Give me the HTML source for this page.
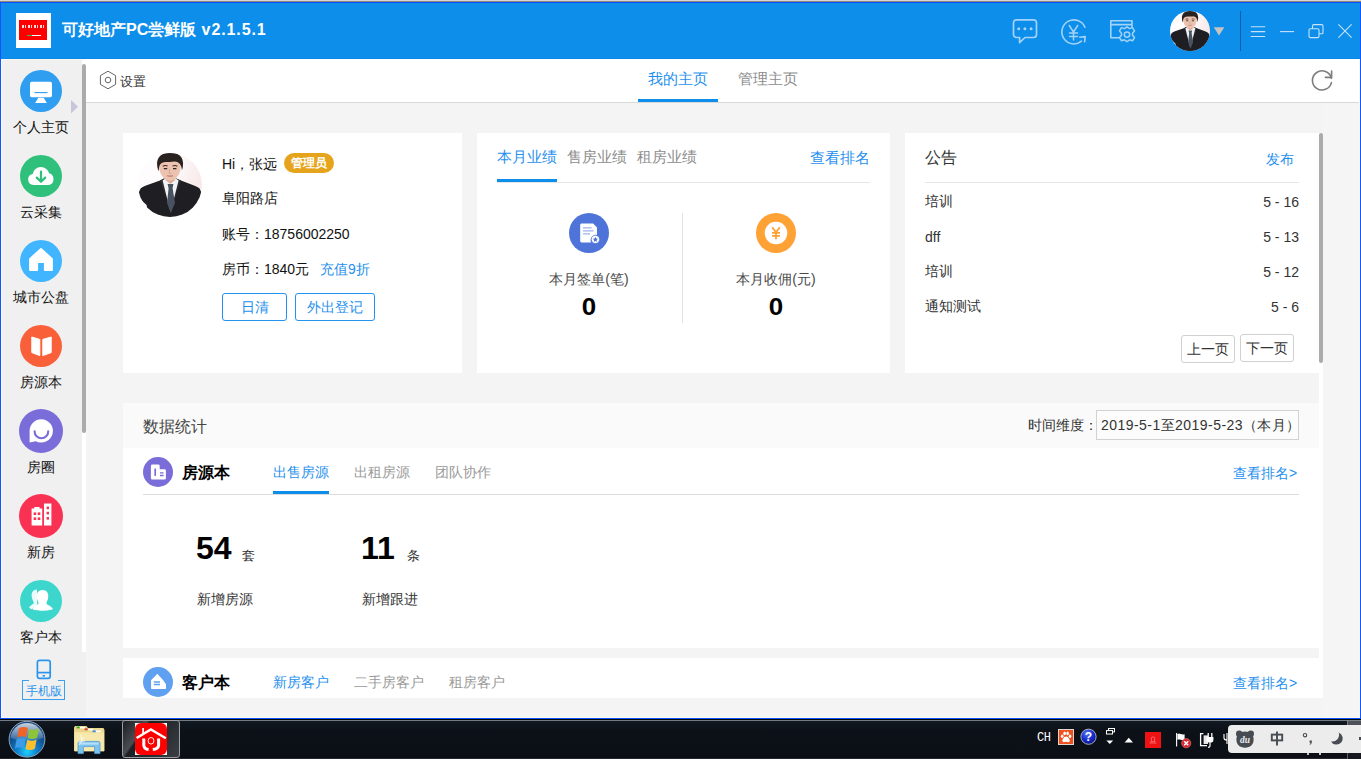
<!DOCTYPE html>
<html lang="zh">
<head>
<meta charset="utf-8">
<title>可好地产PC尝鲜版</title>
<style>
*{margin:0;padding:0;box-sizing:border-box}
html,body{width:1361px;height:759px;overflow:hidden;background:#f4f4f4;font-family:"Liberation Sans",sans-serif;color:#333}
.a{position:absolute;white-space:nowrap}
.t{position:absolute;white-space:nowrap;line-height:20px;height:20px}
.blue{color:#1f90ee}
.grey{color:#8c8c8c}
#win{position:absolute;left:0;top:0;width:1361px;height:719px;background:#f4f4f4;overflow:hidden}
#hdr{position:absolute;left:0;top:3px;width:1361px;height:56px;background:#0d8eea}
#side{position:absolute;left:1px;top:59px;width:85px;height:658px;background:#f0f0f0}
#tabbar{position:absolute;left:86px;top:59px;width:1274px;height:44px;background:#fff;border-bottom:1px solid #d9d9d9}
.card{position:absolute;background:#fff}
.ic{position:absolute;border-radius:50%}
.lbl{position:absolute;left:0;width:82px;text-align:center;font-size:14px;line-height:18px;color:#111;white-space:nowrap}
.btn{position:absolute;height:28px;border:1px solid #2393f0;border-radius:3px;color:#1f90ee;font-size:14px;line-height:26px;text-align:center;white-space:nowrap}
.pbtn{position:absolute;height:28px;border:1px solid #d0d0d0;border-radius:3px;color:#333;font-size:14px;line-height:26px;text-align:center;white-space:nowrap;background:#fff}
#task{position:absolute;left:0;top:719px;width:1361px;height:40px;background:linear-gradient(#131a22 0%,#0c1118 30%,#0b0f15 100%)}
</style>
</head>
<body>
<div id="win">
<!-- top edge -->
<div class="a" style="left:0;top:0;width:1361px;height:1px;background:#d6d6d6"></div>
<div class="a" style="left:0;top:1px;width:1361px;height:1px;background:#8f8878"></div>
<div class="a" style="left:0;top:2px;width:1361px;height:1px;background:#0a52ff;z-index:3"></div>

<!-- HEADER -->
<div id="hdr"></div>
<div class="a" style="left:16px;top:13px;width:35px;height:35px;background:#fff"></div>
<div class="a" style="left:19px;top:20px;width:28px;height:20px;background:#fe0000"></div>
<div class="a" style="left:22px;top:25px;width:22px;height:3px;background:repeating-linear-gradient(90deg,#fff 0 2px,#fe0000 2px 3px,#fff 3px 4px,#fe0000 4px 6px);opacity:.85"></div>
<div class="a" style="left:27px;top:35px;width:5px;height:1px;background:#35c05a"></div>
<div class="a" style="left:32px;top:35px;width:9px;height:1px;background:#fff"></div>
<div class="t" style="left:62px;top:20px;font-size:16px;font-weight:bold;color:#fff">可好地产PC尝鲜版<span style="letter-spacing:.9px"> v2.1.5.1</span></div>

<svg width="0" height="0" style="position:absolute">
 <defs>
  <clipPath id="avc"><circle cx="32" cy="32" r="32"/></clipPath>
  <symbol id="av" viewBox="0 0 64 64">
   <linearGradient id="avbg" x1="0" y1="0" x2="1" y2=".3"><stop offset=".55" stop-color="#fefcfc"/><stop offset="1" stop-color="#f8e9ea"/></linearGradient><circle cx="32" cy="32" r="32" fill="url(#avbg)"/>
   <g clip-path="url(#avc)">
    
    <path d="M0 41 L2.6 35.6 Q4 33.6 8 32.4 L22 27.6 L26 25.4 L38 25.4 L43 27.6 L56 32.4 Q60 33.6 61.6 35.6 L64 41 L64 64 L10 64 L8.6 52 L2 46 Z" fill="#1e1e23"/>
    <path d="M22 27.6 L26 25.4 L32.4 56 Z M43 27.6 L38 25.4 L32.6 56 Z" fill="#2c2c33"/>
    <path d="M24.6 27.4 L32.5 59 L40.6 27.4 L36.5 24.6 L28.5 24.6 Z" fill="#f3f3f6"/>
    <path d="M29.6 31 L35.4 31 L34.6 35.2 L37 50 L32.8 60 L29 50 L30.6 35.2 Z" fill="#485261"/>
    <path d="M27.4 20 h9.8 v7 l-4.8 4 l-5 -4z" fill="#dcae9b"/>
    <path d="M21 13 C21 6 26 3.4 32 3.4 C38 3.4 42.8 6 42.8 13 C42.8 20 38.6 27.4 32 27.4 C25.4 27.4 21 20 21 13 Z" fill="#ebc3b0"/>
    <path d="M24.8 13.2 q2.4 -1.2 4.8 -.2 M34.6 13 q2.4 -1 4.8 .2" stroke="#3a2a26" stroke-width="1.1" fill="none"/>
    <path d="M25.8 15.6 h3.4 M35 15.6 h3.4" stroke="#2e2422" stroke-width="1.3" fill="none"/>
    <path d="M31.8 16 q-.8 3 -.4 4.2 q1 .6 2 0" stroke="#d09c88" stroke-width=".8" fill="none"/>
    <path d="M29.2 22.6 q2.8 1.2 5.6 0" stroke="#c27f72" stroke-width="1.2" fill="none"/>
    <path d="M20.2 17.6 C16.4 6 22.4 -0.6 32 -0.2 C42.6 -0.6 47.4 6 44 17.6 C43.6 12 41 8.4 36.6 8.6 C31 9.6 26 8 23 10.4 C21 12.4 21 14.6 20.8 17.6 Z" fill="#2a2220"/>
   </g>
  </symbol>
 </defs>
</svg>
<!-- chat -->
<svg class="a" style="left:1011px;top:17px" width="28" height="28" viewBox="0 0 28 28" fill="none" stroke="#a3d3f8" stroke-width="1.7" stroke-linejoin="round" stroke-linecap="round">
 <path d="M5.5 2.8 H22.5 a3 3 0 0 1 3 3 V17.5 a3 3 0 0 1 -3 3 H14 L8.6 25.6 V20.5 H5.5 a3 3 0 0 1 -3 -3 V5.8 a3 3 0 0 1 3 -3 Z"/>
 <g fill="#a3d3f8" stroke="none"><circle cx="7.7" cy="11.7" r="1.5"/><circle cx="13.9" cy="11.7" r="1.5"/><circle cx="20.1" cy="11.7" r="1.5"/></g>
</svg>
<!-- yen -->
<svg class="a" style="left:1059px;top:17px" width="30" height="30" viewBox="0 0 30 30" fill="none" stroke="#a3d3f8" stroke-width="1.6" stroke-linecap="round" stroke-linejoin="round">
 <path d="M25.9 10.2 A12 12 0 1 0 22.5 24.2"/>
 <path d="M20.8 20.2 L26.2 19.6 L25.6 24.8"/>
 <path d="M10.3 8.5 L14.5 15 L18.7 8.5 M14.5 15 V23 M10.5 16 H18.5 M10.5 19.5 H18.5" stroke-width="1.5"/>
</svg>
<!-- settings window -->
<svg class="a" style="left:1108px;top:17px" width="30" height="30" viewBox="0 0 30 30" fill="none" stroke="#a3d3f8" stroke-width="1.6" stroke-linejoin="round">
 <path d="M11 20.8 H2.8 V3.8 H24 V10.5 M2.8 7.6 H24"/>
 <path d="M19 9.8 l2.6 1.8 2.9 -1 2 3.3 -2 2.3 0 2 2 2.3 -2 3.3 -2.9 -1 -2.6 1.8 -2.6 -1.8 -2.9 1 -2 -3.3 2 -2.3 0 -2 -2 -2.3 2 -3.3 2.9 1 Z" stroke-width="1.5"/>
 <circle cx="19" cy="17.6" r="2.7" stroke-width="1.5"/>
</svg>
<!-- avatar -->
<svg class="a" style="left:1170px;top:11px" width="40" height="40"><use href="#av"/></svg>
<svg class="a" style="left:1213px;top:26px" width="12" height="10"><path d="M0.8 1.2 H11.3 L6 9.4 Z" fill="#c4c4c4"/></svg>
<div class="a" style="left:1240px;top:11px;width:1px;height:40px;background:#0961ad"></div>
<!-- window controls -->
<svg class="a" style="left:1248px;top:20px" width="108" height="22" viewBox="0 0 108 22" fill="none" stroke="#c6e3fa" stroke-width="1.1">
 <path d="M2.8 6.7 H17.2 M2.8 11.6 H17.2 M2.8 16.5 H17.2"/>
 <path d="M32 11.6 H46"/>
 <rect x="64.5" y="4.6" width="10.5" height="9.2" rx="1.3"/>
 <rect x="61" y="8.8" width="10" height="8.8" rx="1.3" fill="#0d8eea"/>
 <path d="M90.4 4.4 L103.6 17.6 M103.6 4.4 L90.4 17.6"/>
</svg>


<!-- SIDEBAR -->
<div id="side"></div>
<div class="a" style="left:82px;top:59px;width:4px;height:593px;background:#fff"></div>
<div class="a" style="left:82px;top:64px;width:4px;height:369px;background:#ababab;border-radius:2px"></div>
<svg class="a" style="left:70px;top:99px" width="9" height="16"><path d="M1 1 L8 7.7 L1 14.4 Z" fill="#c6c5da"/></svg>
<!-- 1 monitor -->
<svg class="a" style="left:20px;top:70px" width="42" height="42" viewBox="0 0 42 42"><circle cx="21" cy="21" r="21" fill="#2f9df0"/><rect x="10" y="11.8" width="22" height="15.4" rx="1.6" fill="#fff"/><path d="M14.5 22.6 H27.5" stroke="#2f9df0" stroke-width="1.1"/><path d="M18.3 27.8 H23.7 L26.8 33 H15.2 Z" fill="#fff"/></svg>
<div class="lbl" style="top:118px">个人主页</div>
<!-- 2 cloud -->
<svg class="a" style="left:20px;top:155px" width="42" height="42" viewBox="0 0 42 42"><circle cx="21" cy="21" r="21" fill="#2fc07b"/><path d="M13.5 30 a5.6 5.6 0 0 1 -0.8 -11.1 a8.4 8.4 0 0 1 16.4 -0.6 a6 6 0 0 1 -0.6 11.7 Z" fill="#fff"/><path d="M21 16.5 V26.5 M16.8 22.6 L21 26.8 L25.2 22.6" stroke="#2fc07b" stroke-width="2.2" fill="none" stroke-linecap="round" stroke-linejoin="round"/></svg>
<div class="lbl" style="top:203px">云采集</div>
<!-- 3 house -->
<svg class="a" style="left:20px;top:240px" width="42" height="42" viewBox="0 0 42 42"><circle cx="21" cy="21" r="21" fill="#41b5ff"/><path d="M21 9 L32 18.8 V30 H24.8 V22 H17.2 V30 H10 V18.8 Z" fill="#fff" stroke="#fff" stroke-width="1.8" stroke-linejoin="round"/></svg>
<div class="lbl" style="top:288px">城市公盘</div>
<!-- 4 book -->
<svg class="a" style="left:20px;top:325px" width="42" height="42" viewBox="0 0 42 42"><circle cx="21" cy="21" r="21" fill="#f9603a"/><path d="M11.8 12 L19.8 14.4 V30.6 L11.8 27.6 Z M31.2 12 L22.8 14.4 V30.6 L31.2 27.6 Z" fill="#fff" stroke="#fff" stroke-width="1" stroke-linejoin="round"/></svg>
<div class="lbl" style="top:373px">房源本</div>
<!-- 5 bubble -->
<svg class="a" style="left:19px;top:409px" width="44" height="44" viewBox="0 0 44 44"><circle cx="22" cy="22" r="22" fill="#7a6cd9"/><path d="M22.3 10.2 a11.7 11.7 0 1 1 -5.6 22 L10.6 33.4 V22 a11.7 11.7 0 0 1 11.7 -11.8 Z" fill="#fff"/><path d="M15.6 22.4 a6.8 6.8 0 0 0 13.6 0" fill="none" stroke="#7a6cd9" stroke-width="2.1" stroke-linecap="round"/></svg>
<div class="lbl" style="top:458px">房圈</div>
<!-- 6 buildings -->
<svg class="a" style="left:19px;top:494px" width="44" height="44" viewBox="0 0 44 44"><circle cx="22" cy="22" r="22" fill="#f93254"/><path d="M12.6 14.6 H15.3 V13 H20.5 V14.6 H23.2 V31.4 H12.6 Z M25 9.4 H32.4 V31.4 H25 Z" fill="#fff"/><g fill="#f93254"><rect x="14.6" y="18.4" width="2.6" height="2.6"/><rect x="18.7" y="18.4" width="2.6" height="2.6"/><rect x="14.6" y="23.4" width="2.6" height="2.6"/><rect x="18.7" y="23.4" width="2.6" height="2.6"/><rect x="27.6" y="12.6" width="2.4" height="2.6"/><rect x="27.6" y="17.8" width="2.4" height="2.6"/><rect x="27.6" y="23" width="2.4" height="2.6"/></g></svg>
<div class="lbl" style="top:543px">新房</div>
<!-- 7 users -->
<svg class="a" style="left:20px;top:580px" width="42" height="42" viewBox="0 0 42 42"><circle cx="21" cy="21" r="21" fill="#3dd6cc"/><path d="M17 9.6 c-4 0 -6 3.4 -5.2 7.6 c0.6 3 2 4.6 2 5.6 c0 1.6 -3.4 2.4 -4.6 4.6 l2 1.8 l6 -4 Z" fill="#fff" opacity=".9"/><path d="M22.6 10 c4 0 6.2 3.2 5.6 7.4 c-0.4 2.8 -1.8 4.6 -1.8 5.8 c0 1.8 5 2.2 6.4 5.8 c-3 2.2 -17.6 2.4 -20.4 0 c1.4 -3.6 6.2 -4 6.2 -5.8 c0 -1.2 -1.4 -3 -1.8 -5.8 c-0.6 -4.2 1.8 -7.4 5.8 -7.4 Z" fill="#fff"/></svg>
<div class="lbl" style="top:628px">客户本</div>
<!-- phone -->
<svg class="a" style="left:35px;top:658px" width="18" height="23" viewBox="0 0 18 23" fill="none" stroke="#2a95ee" stroke-width="1.7"><rect x="2.4" y="2.4" width="12.8" height="18" rx="2.2"/><path d="M2.4 14.6 H15.2"/><path d="M7.6 17.8 H10" stroke-width="1.6"/></svg>
<div class="a" style="left:22px;top:680px;width:43px;height:20px;border:1px solid #3a9ff0;border-top:none"></div>
<div class="a" style="left:22px;top:680px;width:7px;height:1px;background:#3a9ff0"></div>
<div class="a" style="left:58px;top:680px;width:7px;height:1px;background:#3a9ff0"></div>
<div class="a" style="left:22px;top:682px;width:43px;height:17px;line-height:18px;text-align:center;font-size:12.3px;color:#2a95ee">手机版</div>


<!-- TABBAR -->
<div id="tabbar"></div>
<svg class="a" style="left:99px;top:70px" width="18" height="20" viewBox="0 0 18 20" fill="none" stroke="#666" stroke-width="1"><path d="M9 1.2 L16.6 5.6 V14.4 L9 18.8 L1.4 14.4 V5.6 Z" stroke-linejoin="round"/><circle cx="9" cy="10" r="2.8"/></svg>
<div class="t" style="left:120px;top:72px;font-size:13px">设置</div>
<div class="t blue" style="left:648px;top:69px;font-size:15px">我的主页</div>
<div class="a" style="left:638px;top:99px;width:80px;height:3px;background:#0d8eea"></div>
<div class="t grey" style="left:738px;top:69px;font-size:15px">管理主页</div>
<svg class="a" style="left:1310px;top:68px" width="24" height="24" viewBox="0 0 24 24" fill="none" stroke="#7d7d7d" stroke-width="1.6" stroke-linecap="round" stroke-linejoin="round"><path d="M21.4 10.2 A9.6 9.6 0 1 0 21.4 14.6"/><path d="M21.6 3 V9.4 H15.4" /></svg>


<!-- MAIN -->
<!-- scroll track & right strip -->
<div class="a" style="left:1323px;top:103px;width:37px;height:614px;background:#f5f5f5"></div>
<div class="a" style="left:1319px;top:133px;width:4px;height:565px;background:#fff"></div>
<div class="a" style="left:1319px;top:133px;width:4px;height:230px;background:#ababab;border-radius:2px"></div>

<!-- card 1 -->
<div class="card" style="left:123px;top:133px;width:339px;height:240px"></div>
<svg class="a" style="left:138px;top:153px" width="64" height="64"><use href="#av"/></svg>
<div class="t" style="left:222px;top:154px;font-size:14px;color:#111">Hi，张远</div>
<div class="a" style="left:284px;top:153px;width:50px;height:20px;border-radius:10px;background:#e6a41c;color:#fff;font-size:12px;font-weight:bold;line-height:20px;text-align:center">管理员</div>
<div class="t" style="left:222px;top:189px;font-size:13.7px;color:#111">阜阳路店</div>
<div class="t" style="left:222px;top:224px;font-size:14px;color:#111">账号：18756002250</div>
<div class="t" style="left:222px;top:259px;font-size:14px;color:#111">房币：1840元</div>
<div class="t blue" style="left:320px;top:259px;font-size:14px">充值9折</div>
<div class="btn" style="left:222px;top:293px;width:65px">日清</div>
<div class="btn" style="left:295px;top:293px;width:80px">外出登记</div>

<!-- card 2 -->
<div class="card" style="left:477px;top:133px;width:413px;height:240px"></div>
<div class="t blue" style="left:497px;top:147px;font-size:15px">本月业绩</div>
<div class="t grey" style="left:567px;top:147px;font-size:15px">售房业绩</div>
<div class="t grey" style="left:637px;top:147px;font-size:15px">租房业绩</div>
<div class="t blue" style="left:810px;top:148px;font-size:15px">查看排名</div>
<div class="a" style="left:497px;top:182px;width:373px;height:1px;background:#e6e6e6"></div>
<div class="a" style="left:497px;top:179px;width:60px;height:3px;background:#0d8eea"></div>
<div class="a" style="left:682px;top:213px;width:1px;height:110px;background:#e2e2e2"></div>
<svg class="a" style="left:569px;top:213px" width="40" height="40" viewBox="0 0 40 40"><circle cx="20" cy="20" r="20" fill="#4f74d9"/><path d="M12.6 10.6 H24.2 L28 14.4 V22.5 A5.2 5.2 0 0 0 22 29.4 H12.6 A1.4 1.4 0 0 1 11.2 28 V12 A1.4 1.4 0 0 1 12.6 10.6 Z" fill="#fff"/><path d="M14 14.8 H22.6 M14 17.8 H24.6 M14 20.8 H21" stroke="#9db3ee" stroke-width="1.3"/><circle cx="26.4" cy="26.4" r="4.2" fill="#fff" stroke="#4f74d9" stroke-width=".8"/><path d="M26.4 23.8 l.8 1.7 1.8.2 -1.3 1.3 .3 1.8 -1.6-.9 -1.6.9 .3-1.8 -1.3-1.3 1.8-.2z" fill="#4f74d9"/></svg>
<div class="t" style="left:509px;top:269px;width:160px;text-align:center;font-size:14px;color:#4a4a4a">本月签单(笔)</div>
<div class="t" style="left:509px;top:293px;width:160px;height:28px;line-height:28px;text-align:center;font-size:24px;font-weight:bold;color:#000;transform:scaleX(1.08)">0</div>
<svg class="a" style="left:756px;top:213px" width="40" height="40" viewBox="0 0 40 40"><circle cx="20" cy="20" r="20" fill="#ffa235"/><circle cx="20" cy="20" r="11.3" fill="#fff"/><path d="M16.2 14.2 L20 19.4 L23.8 14.2 M20 19.4 V26.2 M16 19.8 H24 M16 22.9 H24" stroke="#ffa235" stroke-width="1.8" fill="none"/></svg>
<div class="t" style="left:696px;top:269px;width:160px;text-align:center;font-size:14px;color:#4a4a4a">本月收佣(元)</div>
<div class="t" style="left:696px;top:293px;width:160px;height:28px;line-height:28px;text-align:center;font-size:24px;font-weight:bold;color:#000;transform:scaleX(1.08)">0</div>

<!-- card 3 -->
<div class="card" style="left:905px;top:133px;width:414px;height:240px"></div>
<div class="t" style="left:925px;top:148px;font-size:16px;color:#333">公告</div>
<div class="t blue" style="left:1266px;top:149px;font-size:14px">发布</div>
<div class="a" style="left:925px;top:182px;width:374px;height:1px;background:#e6e6e6"></div>
<div class="t" style="left:925px;top:192px;font-size:13.5px">培训</div><div class="t" style="left:1199px;width:100px;text-align:right;top:192px;font-size:14px">5 - 16</div>
<div class="t" style="left:925px;top:227px;font-size:14px">dff</div><div class="t" style="left:1199px;width:100px;text-align:right;top:227px;font-size:14px">5 - 13</div>
<div class="t" style="left:925px;top:262px;font-size:13.5px">培训</div><div class="t" style="left:1199px;width:100px;text-align:right;top:262px;font-size:14px">5 - 12</div>
<div class="t" style="left:925px;top:297px;font-size:13.5px">通知测试</div><div class="t" style="left:1199px;width:100px;text-align:right;top:297px;font-size:14px">5 - 6</div>
<div class="pbtn" style="left:1181px;top:335px;width:54px">上一页</div>
<div class="pbtn" style="left:1240px;top:334px;width:54px">下一页</div>

<!-- data stats -->
<div class="a" style="left:123px;top:403px;width:1196px;height:45px;background:#fafafa"></div>
<div class="card" style="left:123px;top:448px;width:1196px;height:200px"></div>
<div class="t" style="left:143px;top:417px;font-size:16px;color:#444">数据统计</div>
<div class="t" style="left:1028px;top:415px;font-size:14px;color:#333">时间维度：</div>
<div class="a" style="left:1096px;top:410px;width:203px;height:30px;border:1px solid #d2d2d2;background:#fcfcfc"></div>
<div class="t" style="left:1101px;top:415px;font-size:14px;color:#333;letter-spacing:.45px">2019-5-1至2019-5-23（本月）</div>

<svg class="a" style="left:143px;top:457px" width="30" height="30" viewBox="0 0 30 30"><circle cx="15" cy="15" r="15" fill="#7a6cd9"/><path d="M9.3 7.6 H15.3 A1.4 1.4 0 0 1 16.7 9 V12.3 H21.5 A1.4 1.4 0 0 1 22.9 13.7 V21.2 A1.4 1.4 0 0 1 21.5 22.6 H9.3 A1.4 1.4 0 0 1 7.9 21.2 V9 A1.4 1.4 0 0 1 9.3 7.6 Z" fill="#fff"/><path d="M12.2 11.6 V18.9" stroke="#7a6cd9" stroke-width="1.7"/><path d="M17 15.9 H20.6 M17 18.5 H20.6" stroke="#7a6cd9" stroke-width="1.3"/></svg>
<div class="t" style="left:182px;top:463px;font-size:15.8px;font-weight:bold;color:#000">房源本</div>
<div class="t blue" style="left:273px;top:462px;font-size:14px">出售房源</div>
<div class="t" style="left:354px;top:462px;font-size:14px;color:#999">出租房源</div>
<div class="t" style="left:435px;top:462px;font-size:14px;color:#999">团队协作</div>
<div class="t blue" style="left:1233px;top:463px;font-size:14px">查看排名&gt;</div>
<div class="a" style="left:143px;top:494px;width:1156px;height:1px;background:#dcdcdc"></div>
<div class="a" style="left:273px;top:491px;width:56px;height:3px;background:#0d8eea"></div>

<div class="t" style="left:196px;top:528px;height:40px;line-height:40px;font-size:32px;font-weight:bold;color:#000">54</div>
<div class="t" style="left:242px;top:546px;font-size:13px;color:#333">套</div>
<div class="t" style="left:197px;top:589px;font-size:14px;color:#333">新增房源</div>
<div class="t" style="left:361px;top:528px;height:40px;line-height:40px;font-size:32px;font-weight:bold;color:#000">11</div>
<div class="t" style="left:407px;top:546px;font-size:13px;color:#333">条</div>
<div class="t" style="left:362px;top:589px;font-size:14px;color:#333">新增跟进</div>

<!-- customers card -->
<div class="card" style="left:123px;top:658px;width:1200px;height:40px"></div>
<svg class="a" style="left:143px;top:667px" width="30" height="30" viewBox="0 0 30 30"><circle cx="15" cy="15" r="15" fill="#5fa0f0"/><path d="M14.3 7.6 L20 13.8 L20.4 14.6 L22.4 17.4 V21.3 H8.7 V13.4 Z" fill="#fff" stroke="#fff" stroke-width="1.2" stroke-linejoin="round"/><path d="M10.8 14.9 H17 M10.8 17.6 H17" stroke="#5fa0f0" stroke-width="1.5"/></svg>
<div class="t" style="left:182px;top:673px;font-size:15.8px;font-weight:bold;color:#000">客户本</div>
<div class="t blue" style="left:273px;top:672px;font-size:14px">新房客户</div>
<div class="t" style="left:354px;top:672px;font-size:14px;color:#999">二手房客户</div>
<div class="t" style="left:449px;top:672px;font-size:14px;color:#999">租房客户</div>
<div class="t blue" style="left:1233px;top:673px;font-size:14px">查看排名&gt;</div>


<!-- window borders -->
<div class="a" style="left:1px;top:59px;width:1px;height:659px;background:#fcf8f0"></div>
<div class="a" style="left:1px;top:59px;width:85px;height:1px;background:#fcf8f0"></div>
<div class="a" style="left:1px;top:58px;width:1359px;height:1px;background:#0789e5"></div>
<div class="a" style="left:1359px;top:59px;width:1px;height:659px;background:#fcf8f0"></div>
<div class="a" style="left:1px;top:717px;width:1359px;height:1px;background:#fcf8f0"></div>
<div class="a" style="left:0;top:2px;width:1px;height:717px;background:#0f57ff"></div>
<div class="a" style="left:1360px;top:2px;width:1px;height:717px;background:#0f57ff"></div>
<div class="a" style="left:0;top:718px;width:1361px;height:1px;background:#0a52ff"></div>
</div>

<!-- TASKBAR -->
<div id="task"></div>
<div class="a" style="left:0;top:719px;width:1361px;height:1px;background:#05080b"></div>
<div class="a" style="left:0;top:720px;width:1361px;height:1px;background:#737b87"></div>
<div class="a" style="left:0;top:758px;width:1361px;height:1px;background:#25292e"></div>
<!-- start orb -->
<svg class="a" style="left:7px;top:719px" width="40" height="40" viewBox="0 0 40 40">
 <defs>
  <radialGradient id="orb" cx="50%" cy="85%" r="75%"><stop offset="0" stop-color="#20d0ff"/><stop offset=".35" stop-color="#0f84d0"/><stop offset=".7" stop-color="#12518f"/><stop offset="1" stop-color="#1b4a80"/></radialGradient>
  <linearGradient id="orbhl" x1="0" y1="0" x2="0" y2="1"><stop offset="0" stop-color="#fff" stop-opacity=".75"/><stop offset="1" stop-color="#fff" stop-opacity=".12"/></linearGradient>
 </defs>
 <circle cx="20" cy="20.2" r="17.9" fill="url(#orb)" stroke="#8fa6bd" stroke-width="1"/>
 <path d="M3.6 18.7 A16.5 16.5 0 0 1 36.4 18.7 C28 22.5 12 22.5 3.6 18.7 Z" fill="url(#orbhl)"/>
 <g transform="translate(20 19.4) scale(1.12) translate(-19.4 -18.2)">
 <path d="M12.2 9.2 C15 7.6 17.6 7.8 20.2 9 L18.6 17.2 C16 16 13.4 16 10.6 17.4 Z" fill="#f0642a"/>
 <path d="M21.6 9.6 C24.4 11 27.2 10.8 30.2 9.4 L28.4 17.6 C25.6 19 22.8 19 20 17.8 Z" fill="#8cc43c"/>
 <path d="M10.2 18.8 C13 17.4 15.6 17.6 18.2 18.8 L16.6 27 C14 25.8 11.4 25.8 8.6 27.2 Z" fill="#3d9be8"/>
 <path d="M19.6 19.4 C22.4 20.6 25.2 20.6 28 19.2 L26.4 27.4 C23.6 28.8 20.8 28.8 18 27.6 Z" fill="#fcbf2e"/>
 </g>
</svg>
<!-- folder -->
<svg class="a" style="left:72px;top:724px" width="35" height="32" viewBox="0 0 35 32">
 <path d="M2 3.4 L3 2 H14.5 L16 4 H31.5 L32.5 6 V27 H2 Z" fill="#e9d48a"/>
 <path d="M2.6 8 H32 V27.4 H2.6 Z" fill="#f5e6a3"/>
 <path d="M17 6.6 L18.6 4.6 H31 V9 H17 Z" fill="#f0de98"/>
 <rect x="4.6" y="2.6" width="3" height="1.8" fill="#26b32b"/><rect x="8" y="2.8" width="5" height="1.6" fill="#fff"/>
 <rect x="12.6" y="4.4" width="3" height="1.8" fill="#d23a2a"/><rect x="16" y="4.8" width="5" height="1.5" fill="#fff"/>
 <rect x="20.6" y="6.4" width="3" height="1.8" fill="#2f8fe8"/><rect x="24" y="6.6" width="5" height="1.6" fill="#fff"/>
 <path d="M3 10 H31.6 V27 H3 Z" fill="#f7e9ae"/>
 <path d="M6 19 Q6 17.4 7.6 17.4 H26.4 Q28 17.4 28 19 V29.6 H22.6 V22.6 H11.4 V29.6 H6 Z" fill="#7ec3ee" stroke="#4c9cd4" stroke-width=".8"/>
 <path d="M7.2 18.6 H26.8 V20.6 H7.2 Z" fill="#c4e6fa" opacity=".8"/>
 <path d="M9 11 L9.6 17 M6 18 L13 17 M12 13.4 L7 21" stroke="#fff" stroke-width=".8" opacity=".9"/>
</svg>
<!-- active button -->
<div class="a" style="left:122px;top:720px;width:58px;height:38px;border:1px solid #9a9ea3;border-radius:3px;background:linear-gradient(125deg,#1a1d20 0%,#4a4e53 30%,#1c1f22 34%,#2a2d31 65%,#3c4044 100%)"></div>
<svg class="a" style="left:135px;top:723px" width="32" height="32" viewBox="0 0 32 32">
 <rect width="32" height="32" fill="#f4fbf8"/><rect width="32" height="32" rx="6" fill="#fe0000"/>
 <path d="M1.6 15 L15.9 6.4 L30.8 15.2" fill="none" stroke="#fff" stroke-width="2.4" stroke-linejoin="miter"/>
 <path d="M8.1 5 V10.6" fill="none" stroke="#fff" stroke-width="1.7"/>
 <path d="M8.8 15.4 V22.4 Q9.2 26 13.6 26.6 M23.6 15.4 V22.4 Q23.2 26 17.8 26.6" fill="none" stroke="#fff" stroke-width="3"/>
 <ellipse cx="16" cy="17.8" rx="2.9" ry="3.3" fill="none" stroke="#fff" stroke-width=".9"/>
</svg>
<!-- tray -->
<div class="a" style="left:1037px;top:730px;font-family:'Liberation Mono',monospace;font-size:12px;line-height:16px;color:#fff;letter-spacing:-.5px">CH</div>
<svg class="a" style="left:1058px;top:729px" width="16" height="16" viewBox="0 0 16 16"><rect x=".5" y=".5" width="15" height="15" fill="#f0501e" stroke="#ded6cf"/><g fill="#fff"><ellipse cx="4.2" cy="7.2" rx="1.3" ry="1.8"/><ellipse cx="6.6" cy="4.4" rx="1.3" ry="1.8"/><ellipse cx="9.6" cy="4.4" rx="1.3" ry="1.8"/><ellipse cx="12" cy="7.2" rx="1.3" ry="1.8"/><path d="M8.1 7.6 C10.4 7.6 12.4 11 11.6 12.6 C10.8 14 9.4 12.8 8.1 12.8 C6.8 12.8 5.4 14 4.6 12.6 C3.8 11 5.8 7.6 8.1 7.6 Z"/></g></svg>
<svg class="a" style="left:1080px;top:728px" width="17" height="17" viewBox="0 0 17 17"><defs><radialGradient id="hp" cx="40%" cy="30%" r="70%"><stop offset="0" stop-color="#5d7cf5"/><stop offset=".55" stop-color="#1a2fd2"/><stop offset="1" stop-color="#0a148a"/></radialGradient></defs><circle cx="8.5" cy="8.7" r="7.6" fill="url(#hp)" stroke="#aab0c2" stroke-width="1"/><text x="8.5" y="13" font-family="Liberation Sans,sans-serif" font-weight="bold" font-size="12" fill="#fff" text-anchor="middle">?</text></svg>
<svg class="a" style="left:1105px;top:727px" width="11" height="19" viewBox="0 0 11 19" fill="none" stroke="#fff" stroke-width="1"><rect x="3.5" y="1.5" width="6" height="3.4"/><rect x="1.5" y="3.6" width="6" height="3.4" fill="#06090c"/><path d="M1.4 13.6 H8.2 L4.8 17 Z" fill="#fff" stroke="none"/></svg>
<svg class="a" style="left:1124px;top:737px" width="10" height="6"><path d="M0.6 5.4 L4.8 0.8 L9 5.4 Z" fill="#fff"/></svg>
<div class="a" style="left:1145px;top:732px;width:16px;height:16px;background:#ee1215"></div>
<svg class="a" style="left:1148px;top:735px" width="10" height="10" viewBox="0 0 10 10" fill="none" stroke="#ff8a8a" stroke-width=".7"><path d="M3.4 6.4 V2.6 Q5 1 6.6 2.6 V6.4 M2.6 6.6 H7.4 M1.6 8 H8.4"/></svg>
<svg class="a" style="left:1175px;top:732px" width="18" height="17" viewBox="0 0 18 17"><path d="M1.6 1 V14.4" stroke="#fff" stroke-width="1.1"/><path d="M2.4 2 C4.6 1 6.4 3 9.6 2.2 V8 C6.6 8.8 4.6 6.8 2.4 7.8 Z" fill="#fff"/><circle cx="11.2" cy="11.2" r="4.6" fill="#d8252c" stroke="#ef7a7a" stroke-width=".6"/><path d="M9.2 9.2 L13.2 13.2 M13.2 9.2 L9.2 13.2" stroke="#fff" stroke-width="1.5"/></svg>
<svg class="a" style="left:1199px;top:731px" width="16" height="18" viewBox="0 0 16 18" fill="none" stroke="#fff"><path d="M4.4 2.6 H1.6 V14.6 H8" stroke-width="1.3"/><path d="M4.6 4.4 H9 V13 H4.6 Z" fill="#fff" stroke="none" opacity=".9"/><path d="M9.2 2 V6 M12.8 2 V6" stroke-width="1.3"/><path d="M7.6 6 H14.4 V9 Q14.4 11.6 11 11.8 Q7.6 11.6 7.6 9 Z" fill="#fff" stroke="none"/><path d="M11 11.6 V15 Q11 16.4 9 16.4" stroke-width="1.2"/></svg>
<svg class="a" style="left:1222px;top:733px" width="8" height="16" viewBox="0 0 8 16" fill="none" stroke="#fff" stroke-width="1.1"><path d="M2 1 V5 M5 0 V11 M2 5 Q2 7 5 7"/></svg>
<!-- IME panel -->
<div class="a" style="left:1228px;top:725px;width:140px;height:28px;border-radius:4px;background:#ececec"></div>
<svg class="a" style="left:1235px;top:730px" width="20" height="19" viewBox="0 0 20 19"><g fill="#474b52"><circle cx="4.2" cy="3.8" r="3.2"/><circle cx="15.8" cy="3.8" r="3.2"/><path d="M10 1.6 C15.4 1.6 18.6 4.8 18.6 9.6 C18.6 14.6 15.4 17.8 10 17.8 C4.6 17.8 1.4 14.6 1.4 9.6 C1.4 4.8 4.6 1.6 10 1.6 Z"/></g><text x="10" y="12.6" font-family="Liberation Serif,serif" font-style="italic" font-weight="bold" font-size="9.5" fill="#ececec" text-anchor="middle">du</text></svg>
<svg class="a" style="left:1270px;top:731px" width="14" height="15" viewBox="0 0 14 15" fill="none" stroke="#474b52" stroke-width="1.9"><rect x="1.8" y="3.6" width="10.4" height="5.8"/><path d="M7 .4 V14.4"/></svg>
<svg class="a" style="left:1301px;top:731px" width="14" height="16" viewBox="0 0 14 16"><circle cx="4" cy="4.2" r="1.7" fill="none" stroke="#474b52" stroke-width="1.1"/><path d="M8.6 9.6 H10.8 V11.6 Q10.6 13.4 8.8 14 V13 Q9.6 12.6 9.6 11.8 H8.6 Z" fill="#474b52"/></svg>
<svg class="a" style="left:1329px;top:731px" width="16" height="15" viewBox="0 0 16 15"><path d="M9.6 1.6 A6.2 6.2 0 1 1 2 10.4 A6.6 6.6 0 0 0 9.6 1.6 Z" fill="#474b52"/></svg>
<div class="a" style="left:1359px;top:737px;width:2px;height:3px;background:#474b52"></div>
<!-- show desktop -->
<div class="a" style="left:1347px;top:720px;width:14px;height:5px;border:1px solid #7a7f86;border-bottom:none;border-right:none;background:#4d5157"></div>
<div class="a" style="left:1347px;top:753px;width:14px;height:6px;border-left:1px solid #5a5f66;background:#15181c"></div>
<div class="a" style="left:1307px;top:753px;width:2px;height:2px;background:#c8c8c8"></div>
<div class="a" style="left:1319px;top:753px;width:2px;height:2px;background:#c8c8c8"></div>

</body>
</html>
